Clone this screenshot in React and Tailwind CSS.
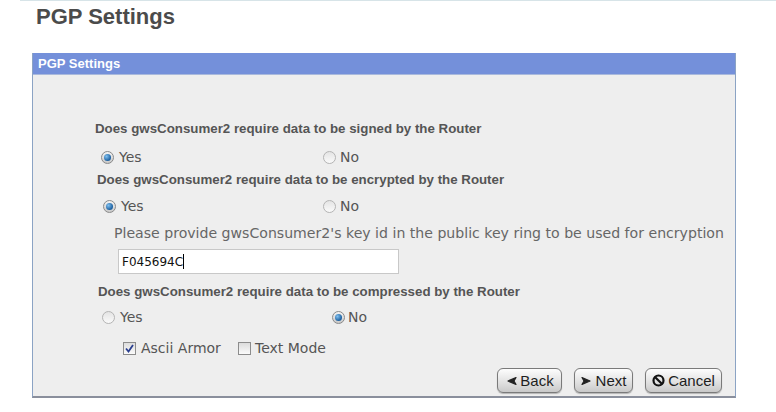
import React from "react";

function Radio({ checked }) {
  return checked ? (
    <span className="inline-flex w-[13px] h-[13px] rounded-full border border-[#8a8a8a] bg-[linear-gradient(#f4f4f4,#c8c8c8)] items-center justify-center shrink-0">
      <span className="w-[7px] h-[7px] rounded-full bg-[radial-gradient(circle_at_35%_35%,#7fc0f0,#1b5e9e_70%)]" />
    </span>
  ) : (
    <span className="inline-block w-[13px] h-[13px] rounded-full border border-[#b4b4b4] bg-[linear-gradient(#e4e4e4,#fafafa)] shrink-0" />
  );
}

function Check({ checked }) {
  return (
    <span className="inline-flex w-[13px] h-[13px] border border-[#8c8c8c] bg-[linear-gradient(#dcdcdc,#fbfbfb)] items-center justify-center shrink-0">
      {checked && (
        <svg width="11" height="11" viewBox="0 0 11 11">
          <path d="M2 5.5 L4.5 8.5 L9 2" fill="none" stroke="#2a3f8f" strokeWidth="1.8" />
        </svg>
      )}
    </span>
  );
}

function Btn({ icon, label, w }) {
  return (
    <button className={`h-[25px] ${w} rounded-[6px] border border-[#7a7a7a] bg-[linear-gradient(#fdfdfd,#e2e2e2_55%,#c9c9c9)] shadow-[0_1px_1px_rgba(0,0,0,0.25)] flex items-center justify-center gap-[3px] text-[15px] text-[#1e1e1e] font-['Liberation_Sans',Arial,sans-serif] leading-none`}>
      {icon}
      <span>{label}</span>
    </button>
  );
}

const BackIcon = (
  <svg width="12" height="10" viewBox="0 0 12 10"><path d="M11 1.5 L3 5 L11 8.5 L9 5 Z" fill="#222" stroke="#222" strokeWidth="1.2" strokeLinejoin="round" /></svg>
);
const NextIcon = (
  <svg width="12" height="10" viewBox="0 0 12 10"><path d="M1 1.5 L9 5 L1 8.5 L3 5 Z" fill="#222" stroke="#222" strokeWidth="1.2" strokeLinejoin="round" /></svg>
);
const CancelIcon = (
  <svg width="13" height="13" viewBox="0 0 13 13"><circle cx="6.5" cy="6.5" r="5" fill="none" stroke="#111" strokeWidth="2.2" /><path d="M3.2 3.2 L9.8 9.8" stroke="#111" strokeWidth="2.2" /></svg>
);

export default function App() {
  const q = "h-[14px] flex items-center text-[13.3px] font-bold text-[#555] font-['Liberation_Sans',Arial,sans-serif] leading-[14px]";
  const opt = "h-[20px] text-[14px] text-[#555] font-['DejaVu_Sans',Verdana,sans-serif] leading-[16px]";
  return (
    <div className="w-[776px] h-[412px] bg-white relative overflow-hidden">
      <div className="ml-[20px] h-px bg-[#d7e4e8]" />
      <h1 className="ml-[36px] mt-[3px] text-[22px] font-bold text-[#4b4b4b] font-['Liberation_Sans',Arial,sans-serif] leading-[26px]">PGP Settings</h1>
      <div className="ml-[32px] mt-[23px] w-[704px] h-[345px] border-l border-r border-[#8ba3c4] border-b-2 border-b-[#8a8f9c] flex flex-col">
        <div className="h-[22px] shrink-0 bg-[#7490da] border-b border-[#a9b9dc] flex items-center pl-[5px] text-[13px] font-bold text-white font-['Liberation_Sans',Arial,sans-serif]">PGP Settings</div>
        <div className="flex-1 bg-[#eeeeee] flex flex-col pt-[47px]">
          <div className={`${q} ml-[62px]`}>Does gwsConsumer2 require data to be signed by the Router</div>
          <div className={`flex ml-[68px] mt-[11px] ${opt}`}>
            <div className="w-[222px] flex items-center gap-[5px]"><Radio checked /><span>Yes</span></div>
            <div className="flex items-center gap-[4px]"><Radio /><span>No</span></div>
          </div>
          <div className={`${q} ml-[64px] mt-[6px]`}>Does gwsConsumer2 require data to be encrypted by the Router</div>
          <div className={`flex ml-[70px] mt-[9px] ${opt}`}>
            <div className="w-[220px] flex items-center gap-[5px]"><Radio checked /><span>Yes</span></div>
            <div className="flex items-center gap-[4px]"><Radio /><span>No</span></div>
          </div>
          <div className={`ml-[81px] mt-[8px] h-[18px] flex items-center text-[14.1px] text-[#666] font-['DejaVu_Sans',Verdana,sans-serif] leading-[18px] whitespace-nowrap`}>Please provide gwsConsumer2's key id in the public key ring to be used for encryption</div>
          <div className="ml-[85px] mt-[7px] w-[281px] h-[25px] bg-white border border-[#c8c8c8] flex items-center pl-[3px] text-[12px] text-[#111] font-['DejaVu_Sans',Tahoma,sans-serif]">
            F045694C<span className="w-px h-[15px] bg-black" />
          </div>
          <div className={`${q} ml-[65px] mt-[11px]`}>Does gwsConsumer2 require data to be compressed by the Router</div>
          <div className={`flex ml-[69px] mt-[8px] ${opt}`}>
            <div className="w-[230px] flex items-center gap-[5px]"><Radio /><span>Yes</span></div>
            <div className="flex items-center gap-[3px]"><Radio checked /><span>No</span></div>
          </div>
          <div className={`flex ml-[90px] mt-[11px] ${opt} items-center`}>
            <div className="w-[115px] flex items-center gap-[5px]"><Check checked /><span>Ascii Armor</span></div>
            <div className="flex items-center gap-[4px]"><Check /><span>Text Mode</span></div>
          </div>
          <div className="flex justify-end gap-[12px] mr-[13px] mt-[10px]">
            <Btn icon={BackIcon} label="Back" w="w-[65px]" />
            <Btn icon={NextIcon} label="Next" w="w-[59px]" />
            <Btn icon={CancelIcon} label="Cancel" w="w-[77px]" />
          </div>
        </div>
      </div>
    </div>
  );
}
